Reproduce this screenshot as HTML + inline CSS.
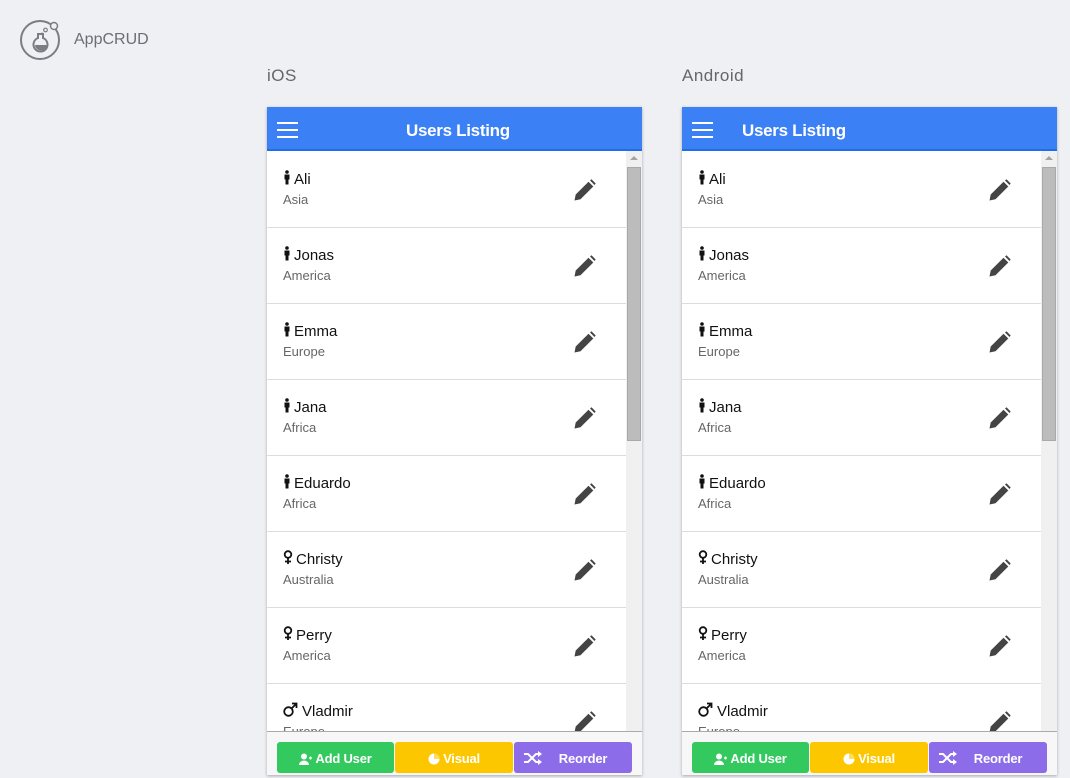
<!DOCTYPE html>
<html><head><meta charset="utf-8"><style>
*{box-sizing:border-box;margin:0;padding:0}
body{width:1070px;height:778px;background:#eff0f4;font-family:"Liberation Sans",sans-serif;position:relative;overflow:hidden}
.logo{position:absolute;left:20px;top:20px}
.brand{position:absolute;left:74px;top:31px;font-size:16px;color:#6b6e74}
.lbl{position:absolute;top:66px;font-size:17px;color:#666;letter-spacing:.5px}
.ph{position:absolute;top:107px;width:375px;height:668px;background:#fff;box-shadow:0 1px 3px rgba(0,0,0,.3);overflow:hidden}
.hd{height:44px;background:#3b80f5;border-bottom:2px solid #1f6de8;position:relative;color:#fff}
.hd .t{position:absolute;top:14px;font-weight:bold;font-size:17px;letter-spacing:-.3px}
.hb{position:absolute;left:10px;top:15px;width:21px}
.hb i{display:block;height:2px;background:#fff;margin-bottom:5px}
.list{position:absolute;top:45px;left:0;width:359px;height:579px;overflow:hidden}
.row{height:76px;border-bottom:1px solid #ddd;position:relative}
.row .n{position:absolute;left:16px;top:18px;font-size:15px;color:#111;white-space:nowrap}
.row .s{position:absolute;left:16px;top:40px;font-size:13px;color:#666}
.row .pen{position:absolute;left:307px;top:27px}
.sb{position:absolute;left:359px;top:44px;width:16px;height:580px;background:#f0f0f0}
.sb .th{position:absolute;left:1px;top:16px;width:14px;height:274px;background:#bcbcbc;border:1px solid #a9a9a9}
.sb .ar{position:absolute;left:4px;top:5px;border:4px solid transparent;border-bottom:4px solid #a3a3a3;border-top:none}
.ft{position:absolute;top:624px;left:0;width:375px;height:44px;background:#f7f7f7;border-top:1px solid #aaa}
.b{position:absolute;top:10px;height:31px;border-radius:3px;color:#fff;font-size:13px;text-align:center;line-height:33px;font-weight:bold;letter-spacing:-.2px}
.b svg{vertical-align:-2px;margin-right:3px}
</style></head><body>
<svg class="logo" width="42" height="42" viewBox="0 0 42 42"><circle cx="20" cy="20" r="19" fill="none" stroke="#7a7d82" stroke-width="2"/><circle cx="34" cy="6" r="3.5" fill="#eff0f4" stroke="#7a7d82" stroke-width="1.5"/><circle cx="25.5" cy="10" r="1.8" fill="none" stroke="#7a7d82" stroke-width="1.2"/><circle cx="22" cy="13.5" r="1" fill="#7a7d82"/><path d="M18 14h5v4a7 7 0 1 1-5 0z" fill="none" stroke="#7a7d82" stroke-width="2"/><path d="M15 25h13a6 5 0 0 1-13 0z" fill="#7a7d82"/></svg>
<div class="brand">AppCRUD</div>
<div class="lbl" style="left:267px">iOS</div>
<div class="lbl" style="left:682px">Android</div>

<div class="ph" style="left:267px">
<div class="hd"><div class="hb"><i></i><i></i><i></i></div><div class="t" style="left:139px">Users Listing</div></div>
<div class="list"></div>
<div class="sb"><div class="ar"></div><div class="th"></div></div>
<div class="ft"></div>
</div>

<div class="ph" style="left:682px">
<div class="hd"><div class="hb"><i></i><i></i><i></i></div><div class="t" style="left:60px">Users Listing</div></div>
<div class="list"></div>
<div class="sb"><div class="ar"></div><div class="th"></div></div>
<div class="ft"></div>
</div>

<script>
var d=[["m","Ali","Asia"],["m","Jonas","America"],["m","Emma","Europe"],["m","Jana","Africa"],["m","Eduardo","Africa"],["f","Christy","Australia"],["f","Perry","America"],["M","Vladmir","Europe"]];
var pen='<svg class="pen" width="22" height="22" viewBox="0 0 22 22"><path d="M0.5 21.5l1.2-6L14.5 2.7l4.8 4.8L6.5 20.3z" fill="#444"/><path d="M16 1.5l1.5-1.2 4.2 4.2L20.5 6z" fill="#444"/></svg>';
var man='<svg width="8" height="15" viewBox="0 0 8 15" style="vertical-align:-1px;margin-right:3px"><circle cx="4" cy="2" r="1.8" fill="#111"/><path d="M1.5 4.5h5v5h-1v5h-3v-5h-1z" fill="#111"/></svg>';
var fem='<svg width="10" height="15" viewBox="0 0 10 15" style="vertical-align:-1px;margin-right:3px"><circle cx="5" cy="4.5" r="3.3" fill="none" stroke="#111" stroke-width="1.8"/><path d="M5 8v6M2 11.5h6" stroke="#111" stroke-width="1.8"/></svg>';
var mal='<svg width="15" height="15" viewBox="0 0 15 15" style="vertical-align:-1px;margin-right:4px"><circle cx="5.5" cy="9.5" r="4.3" fill="none" stroke="#111" stroke-width="1.8"/><path d="M8.5 6.5L13.5 1.5M9 1.5h4.5V6" fill="none" stroke="#111" stroke-width="1.8"/></svg>';
var h='';d.forEach(function(r){var ic=r[0]=="m"?man:(r[0]=="f"?fem:mal);h+='<div class="row"><div class="n">'+ic+r[1]+'</div><div class="s">'+r[2]+'</div>'+pen+'</div>';});
document.querySelectorAll('.list').forEach(function(e){e.innerHTML=h});
var f='<div class="b" style="left:10px;width:117px;background:#34c95f"><svg width="13" height="12" viewBox="0 0 13 12"><circle cx="5" cy="3.5" r="3" fill="#fff"/><path d="M0 12a5 4.5 0 0 1 10 0z" fill="#fff"/><path d="M10 5h3M11.5 3.5v3" stroke="#fff" stroke-width="1.3"/></svg>Add User</div><div class="b" style="left:128px;width:118px;background:#fdc700"><svg width="12" height="12" viewBox="0 0 12 12"><circle cx="6" cy="6" r="5.5" fill="#fff"/><path d="M6 6V0.5A5.5 5.5 0 0 1 11.5 6z" fill="#fdc700" opacity=".6"/></svg>Visual</div><div class="b" style="left:247px;width:118px;background:#8c6ce9"><svg width="18" height="14" viewBox="0 0 18 14" style="position:absolute;left:10px;top:9px"><path d="M0 3h4l8 8h4M0 11h4l8-8h4" fill="none" stroke="#fff" stroke-width="2"/><path d="M14 0l4 3-4 3zM14 8l4 3-4 3z" fill="#fff"/></svg><span style="margin-left:20px">Reorder</span></div>';
document.querySelectorAll('.ft').forEach(function(e){e.innerHTML=f});
</script>
</body></html>
